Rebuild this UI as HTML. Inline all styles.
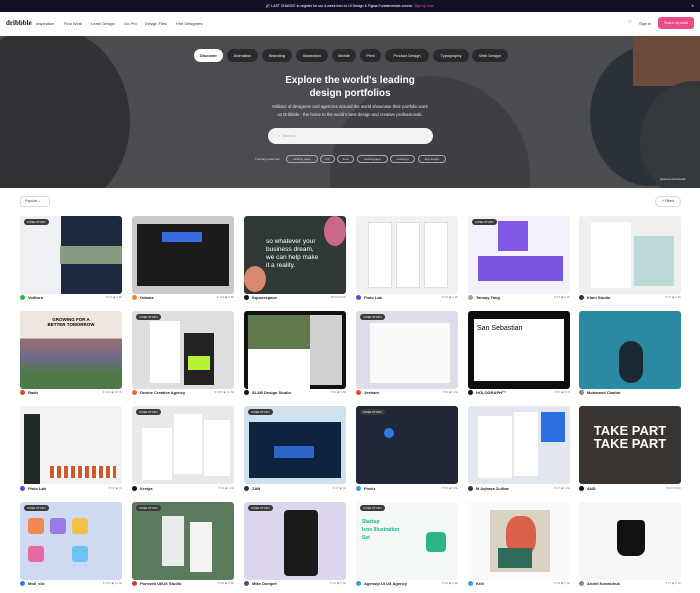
<!DOCTYPE html>
<html><head><meta charset="utf-8"><style>
*{margin:0;padding:0;box-sizing:border-box}
body{width:700px;height:593px;overflow:hidden;background:#fff;font-family:"Liberation Sans",sans-serif;position:relative}
.a{position:absolute}
.top{left:0;top:0;width:700px;height:12px;background:#13112a;color:#fff;font-size:3.5px;text-align:center;line-height:12px}
.nav{top:12px;left:0;width:700px;height:24px;background:#fff}
.nav span{position:absolute;top:9px;font-size:4px;color:#333}
.hero{top:36px;left:0;width:700px;height:152px;background:#4b4c50;overflow:hidden}
.circ{position:absolute;border-radius:50%}
.pill{position:absolute;top:13px;height:13px;border-radius:7px;background:#2a2a2c;color:#eee;font-size:4px;line-height:13px;text-align:center}
.tag{position:absolute;top:119px;height:8px;border:1px solid #aaa;border-radius:5px;color:#ddd;font-size:3px;line-height:6px;text-align:center}
.card{position:absolute;width:102px;height:78px;border-radius:3px;overflow:hidden}
.meta{position:absolute;width:102px;height:6px;font-size:4px;color:#222;font-weight:bold}
.meta i{display:inline-block;width:5px;height:5px;border-radius:50%;vertical-align:middle;margin-right:3px}
.meta b{position:absolute;right:0;top:0;font-weight:normal;color:#888;font-size:3px}
.cs{position:absolute;left:4px;top:3px;background:#3a3a3a;color:#fff;font-size:3px;padding:1px 3px;border-radius:3px}
</style></head><body>
<div class="a top">🎉 LAST CHANCE to register for our 4-week intro to UI Design &amp; Figma Fundamentals course. <span style="color:#ea4c89">Sign up now.</span><span style="position:absolute;right:6px">✕</span></div>
<div class="a nav">
<span style="left:6px;top:7px;font-size:7px;font-weight:bold;font-family:'Liberation Serif',serif;color:#111">dribbble</span>
<span style="left:36px">Inspiration</span><span style="left:64px">Find Work</span><span style="left:91px">Learn Design</span><span style="left:124px">Go Pro</span><span style="left:145px">Design Files</span><span style="left:176px">Hire Designers</span>
<span style="left:628px;font-size:6px;top:7px;color:#777">○</span><span style="left:639px">Sign in</span>
<span style="left:658px;top:5px;width:36px;height:12px;background:#ea4c89;border-radius:3px;color:#fff;font-size:3.6px;line-height:12px;text-align:center">Share my work</span>
</div>
<div class="a hero">
<div class="circ" style="left:-40px;top:-10px;width:170px;height:190px;background:#2f3135"></div>
<div class="circ" style="left:330px;top:40px;width:200px;height:200px;background:#3e3f43"></div>
<div class="circ" style="left:590px;top:10px;width:120px;height:140px;background:#2a3238"></div>
<div class="a" style="left:633px;top:0;width:67px;height:50px;background:#6d4a3a"></div>
<div class="circ" style="left:640px;top:45px;width:110px;height:120px;background:#33383d"></div>
<div class="pill" style="left:194px;width:29px;background:#fff;color:#111;font-weight:bold">Discover</div>
<div class="pill" style="left:227px;width:31px">Animation</div>
<div class="pill" style="left:262px;width:30px">Branding</div>
<div class="pill" style="left:296px;width:32px">Illustration</div>
<div class="pill" style="left:332px;width:24px">Mobile</div>
<div class="pill" style="left:360px;width:21px">Print</div>
<div class="pill" style="left:385px;width:44px">Product Design</div>
<div class="pill" style="left:433px;width:36px">Typography</div>
<div class="pill" style="left:472px;width:36px">Web Design</div>
<div class="a" style="left:0;width:700px;top:38px;text-align:center;color:#fff;font-weight:bold;font-size:10px;line-height:13px">Explore the world's leading<br>design portfolios</div>
<div class="a" style="left:0;width:700px;top:67px;text-align:center;color:#e5e5e5;font-size:4.3px;line-height:8px">Millions of designers and agencies around the world showcase their portfolio work<br>on Dribbble - the home to the world's best design and creative professionals.</div>
<div class="a" style="left:268px;top:92px;width:165px;height:16px;background:#f2f2f2;border-radius:8px;font-size:4px;color:#aaa;line-height:16px;padding-left:10px">⌕ &nbsp;Search...</div>
<div class="a" style="left:255px;top:121px;font-size:3px;color:#ddd">Trending searches</div>
<div class="tag" style="left:286px;width:32px">landing page</div>
<div class="tag" style="left:320px;width:15px">ios</div>
<div class="tag" style="left:337px;width:17px">food</div>
<div class="tag" style="left:357px;width:31px">landingpage</div>
<div class="tag" style="left:390px;width:25px">uxdesign</div>
<div class="tag" style="left:418px;width:28px">app design</div>
<div class="a" style="left:660px;top:141px;font-size:3px;color:#ddd">@alexandradhealth</div>
</div>
<div class="a" style="left:20px;top:196px;width:30px;height:11px;border:1px solid #ddd;border-radius:3px;font-size:3.5px;line-height:9px;padding-left:4px;color:#444">Popular ⌄</div>
<div class="a" style="left:655px;top:196px;width:26px;height:11px;border:1px solid #ddd;border-radius:6px;font-size:3.5px;line-height:9px;text-align:center;color:#444">≡ Filters</div>

<!-- row1 -->
<div class="card" style="left:20px;top:216px;background:linear-gradient(90deg,#eef0f3 40%,#1d2a40 40%)"><div class="cs">CASE STUDY</div><div class="a" style="left:40px;top:30px;width:62px;height:18px;background:#8a9a80"></div></div>
<div class="card" style="left:132px;top:216px;background:#c9cacc"><div class="a" style="left:5px;top:8px;width:92px;height:62px;background:#1b1b1e"></div><div class="a" style="left:30px;top:16px;width:40px;height:10px;background:#3a6ae0"></div></div>
<div class="card" style="left:244px;top:216px;background:#2e3a33;color:#fff;font-size:6.5px;line-height:8px;padding:22px 0 0 22px">so whatever your<br>business dream,<br>we can help make<br>it a reality.<div class="a" style="left:80px;top:0;width:22px;height:30px;background:#c9688a;border-radius:50%"></div><div class="a" style="left:0;top:50px;width:22px;height:26px;background:#d98870;border-radius:50%"></div></div>
<div class="card" style="left:356px;top:216px;background:#f1f1f3"><div class="a" style="left:12px;top:6px;width:24px;height:66px;background:#fff;border:1px solid #ddd"></div><div class="a" style="left:40px;top:6px;width:24px;height:66px;background:#fff;border:1px solid #ddd"></div><div class="a" style="left:68px;top:6px;width:24px;height:66px;background:#fff;border:1px solid #ddd"></div></div>
<div class="card" style="left:468px;top:216px;background:#f3f2fb"><div class="cs">CASE STUDY</div><div class="a" style="left:30px;top:5px;width:30px;height:30px;background:#8257e6"></div><div class="a" style="left:10px;top:40px;width:85px;height:25px;background:#7b55e0"></div></div>
<div class="card" style="left:579px;top:216px;background:#eef0ec"><div class="a" style="left:12px;top:6px;width:40px;height:66px;background:#fff"></div><div class="a" style="left:55px;top:20px;width:40px;height:50px;background:#bcd8d8"></div></div>
<!-- row2 -->
<div class="card" style="left:20px;top:311px;background:linear-gradient(#efe7df 35%,#9a6f72 35%,#6e6a8a 60%,#4d7a48 80%)"><div class="a" style="left:0;top:6px;width:102px;text-align:center;font-size:4.5px;font-weight:bold">GROWING FOR A<br>BETTER TOMORROW</div></div>
<div class="card" style="left:132px;top:311px;background:#dedee0"><div class="cs">CASE STUDY</div><div class="a" style="left:18px;top:10px;width:30px;height:62px;background:#fff"></div><div class="a" style="left:52px;top:22px;width:30px;height:52px;background:#222"></div><div class="a" style="left:56px;top:45px;width:22px;height:14px;background:#b8f03a"></div></div>
<div class="card" style="left:244px;top:311px;background:#111"><div class="a" style="left:4px;top:4px;width:62px;height:34px;background:#5f7a4a"></div><div class="a" style="left:4px;top:38px;width:62px;height:40px;background:#fff"></div><div class="a" style="left:66px;top:4px;width:32px;height:70px;background:#d0d0d0"></div></div>
<div class="card" style="left:356px;top:311px;background:#dbdde8"><div class="cs">CASE STUDY</div><div class="a" style="left:14px;top:12px;width:80px;height:60px;background:#fafafa"></div></div>
<div class="card" style="left:468px;top:311px;background:#0d0d0d"><div class="a" style="left:6px;top:8px;width:90px;height:62px;background:#fff;font-size:7px;padding:6px 3px">San Sebastian</div></div>
<div class="card" style="left:579px;top:311px;background:#2a8aa3"><div class="a" style="left:40px;top:30px;width:24px;height:42px;background:#1a2a35;border-radius:12px"></div></div>
<!-- row3 -->
<div class="card" style="left:20px;top:406px;background:#f1f2f1"><div class="a" style="left:4px;top:8px;width:16px;height:70px;background:#1e2b22"></div><div class="a" style="left:30px;top:60px;width:66px;height:12px;background:repeating-linear-gradient(90deg,#d9552a 0 4px,#fff 4px 7px)"></div></div>
<div class="card" style="left:132px;top:406px;background:#e8e9ec"><div class="cs">CASE STUDY</div><div class="a" style="left:10px;top:22px;width:30px;height:52px;background:#fff"></div><div class="a" style="left:42px;top:8px;width:28px;height:60px;background:#fff"></div><div class="a" style="left:72px;top:14px;width:26px;height:56px;background:#fff"></div></div>
<div class="card" style="left:244px;top:406px;background:#cfe0ee"><div class="cs">CASE STUDY</div><div class="a" style="left:5px;top:16px;width:92px;height:56px;background:#0e2340"></div><div class="a" style="left:30px;top:40px;width:40px;height:12px;background:#2b66c8"></div></div>
<div class="card" style="left:356px;top:406px;background:#1f2738"><div class="cs">CASE STUDY</div><div class="a" style="left:28px;top:22px;width:10px;height:10px;background:#2f7be6;border-radius:50%"></div></div>
<div class="card" style="left:468px;top:406px;background:#e2e6ee"><div class="a" style="left:10px;top:10px;width:34px;height:62px;background:#fff"></div><div class="a" style="left:46px;top:6px;width:24px;height:64px;background:#fff"></div><div class="a" style="left:73px;top:6px;width:24px;height:30px;background:#2d6fe0"></div></div>
<div class="card" style="left:579px;top:406px;background:#3a3430;color:#fff;font-weight:bold;font-size:13px;line-height:13px;text-align:center;padding-top:18px">TAKE PART<br>TAKE PART</div>
<!-- row4 -->
<div class="card" style="left:20px;top:502px;background:#cfd9f2"><div class="cs">CASE STUDY</div><div class="a" style="left:8px;top:16px;width:16px;height:16px;background:#f08a50;border-radius:3px"></div><div class="a" style="left:30px;top:16px;width:16px;height:16px;background:#9b7be8;border-radius:3px"></div><div class="a" style="left:52px;top:16px;width:16px;height:16px;background:#f2c14a;border-radius:3px"></div><div class="a" style="left:8px;top:44px;width:16px;height:16px;background:#e86aa0;border-radius:3px"></div><div class="a" style="left:52px;top:44px;width:16px;height:16px;background:#6cc2f0;border-radius:3px"></div></div>
<div class="card" style="left:132px;top:502px;background:#5c7a5c"><div class="cs">CASE STUDY</div><div class="a" style="left:30px;top:14px;width:22px;height:50px;background:#e9ece9"></div><div class="a" style="left:58px;top:20px;width:22px;height:50px;background:#f4f4f4"></div></div>
<div class="card" style="left:244px;top:502px;background:#ddd6ee"><div class="cs">CASE STUDY</div><div class="a" style="left:40px;top:8px;width:34px;height:66px;background:#1a1a1a;border-radius:4px"></div></div>
<div class="card" style="left:356px;top:502px;background:#f3f7f5"><div class="cs">CASE STUDY</div><div class="a" style="left:6px;top:16px;font-size:5px;color:#1bb28a;font-weight:bold;line-height:8px">Startup<br>Icon Illustration<br>Set</div><div class="a" style="left:70px;top:30px;width:20px;height:20px;background:#2bb58a;border-radius:4px"></div></div>
<div class="card" style="left:468px;top:502px;background:#fafafa"><div class="a" style="left:22px;top:8px;width:60px;height:62px;background:#d9d3c2"></div><div class="a" style="left:38px;top:14px;width:30px;height:40px;background:#d9614a;border-radius:40%"></div><div class="a" style="left:30px;top:46px;width:34px;height:20px;background:#2f6a5a"></div></div>
<div class="card" style="left:579px;top:502px;background:#f6f6f6"><div class="a" style="left:38px;top:18px;width:28px;height:36px;background:#111;border-radius:4px 4px 8px 8px"></div></div>

<!-- metas -->
<div class="meta" style="left:20px;top:295px"><i style="background:#2bb24c"></i>Voltfora<b>♥ 21 ◉ 4.8k</b></div>
<div class="meta" style="left:132px;top:295px"><i style="background:#f08030"></i>Odama<b>♥ 116 ◉ 6.8k</b></div>
<div class="meta" style="left:244px;top:295px"><i style="background:#111"></i>Squarespace<b>BOOSTED</b></div>
<div class="meta" style="left:356px;top:295px"><i style="background:#6a3fd8"></i>Piolo Lab<b>♥ 62 ◉ 4.9k</b></div>
<div class="meta" style="left:468px;top:295px"><i style="background:#b8a090"></i>Tanvay Tang<b>♥ 84 ◉ 9.9k</b></div>
<div class="meta" style="left:579px;top:295px"><i style="background:#333"></i>Kiam Studio<b>♥ 74 ◉ 6.8k</b></div>
<div class="meta" style="left:20px;top:390px"><i style="background:#e8452c"></i>Radu<b>♥ 129 ◉ 16.7k</b></div>
<div class="meta" style="left:132px;top:390px"><i style="background:#f06a30"></i>Dezine Creative Agency<b>♥ 205 ◉ 16.8k</b></div>
<div class="meta" style="left:244px;top:390px"><i style="background:#111"></i>SLAB Design Studio<b>♥ 50 ◉ 3.6k</b></div>
<div class="meta" style="left:356px;top:390px"><i style="background:#e94c2f"></i>Jeeham<b>♥ 56 ◉ 5.6k</b></div>
<div class="meta" style="left:468px;top:390px"><i style="background:#111"></i>HOLOGRAPH™<b>♥ 87 ◉ 8.7k</b></div>
<div class="meta" style="left:579px;top:390px"><i style="background:#888"></i>Mohamed Chahin<b></b></div>
<div class="meta" style="left:20px;top:486px"><i style="background:#6a3fd8"></i>Piolo Lab<b>♥ 69 ◉ 7k</b></div>
<div class="meta" style="left:132px;top:486px"><i style="background:#111"></i>Kretya<b>♥ 63 ◉ 1.4k</b></div>
<div class="meta" style="left:244px;top:486px"><i style="background:#333"></i>ZAN<b>♥ 47 ◉ 4k</b></div>
<div class="meta" style="left:356px;top:486px"><i style="background:#3a9fd8"></i>Pixelz<b>♥ 57 ◉ 5.6k</b></div>
<div class="meta" style="left:468px;top:486px"><i style="background:#333"></i>M Aqhasa Zulikar<b>♥ 47 ◉ 9.6k</b></div>
<div class="meta" style="left:579px;top:486px"><i style="background:#111"></i>AND<b>BOOSTED</b></div>
<div class="meta" style="left:20px;top:581px"><i style="background:#3a7ae0"></i>Moli_xiiz<b>♥ 147 ◉ 11.4k</b></div>
<div class="meta" style="left:132px;top:581px"><i style="background:#e83a3a"></i>Purrweb UI/UX Studio<b>♥ 66 ◉ 6.8k</b></div>
<div class="meta" style="left:244px;top:581px"><i style="background:#555"></i>Mike Dompel<b>♥ 62 ◉ 5.6k</b></div>
<div class="meta" style="left:356px;top:581px"><i style="background:#3a9fd8"></i>Agensip UI UX Agency<b>♥ 40 ◉ 2.8k</b></div>
<div class="meta" style="left:468px;top:581px"><i style="background:#3a9fd8"></i>Kriil<b>♥ 63 ◉ 5.9k</b></div>
<div class="meta" style="left:579px;top:581px"><i style="background:#a08070"></i>Andrii Kovalchuk<b>♥ 27 ◉ 6.4k</b></div>
</body></html>
